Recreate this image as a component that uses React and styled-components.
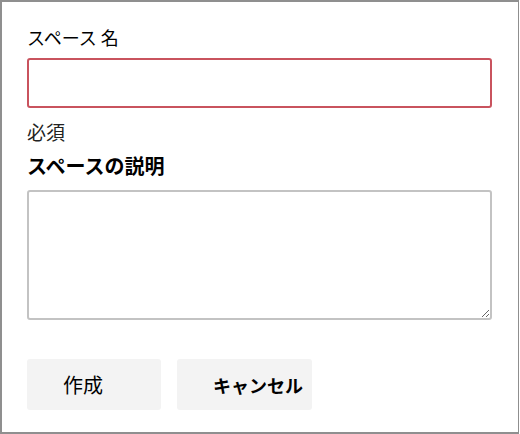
import React from 'react'
import styled, { createGlobalStyle } from 'styled-components'

const GlobalStyle = createGlobalStyle`
  html, body {
    margin: 0;
    padding: 0;
    background: #ffffff;
  }
  body {
    font-family: "Noto Sans CJK JP", "Noto Sans", sans-serif;
    color: #1b1b1b;
  }
`

const Frame = styled.div`
  box-sizing: border-box;
  width: 519px;
  height: 434px;
  border: 2px solid #8f8f8f;
  border-right-width: 1px;
  padding: 23px 0 0 25px;
  display: flex;
  flex-direction: column;
  align-items: flex-start;
`

const Label = styled.label`
  font-size: ${p => (p.$strong ? '20px' : '18px')};
  font-weight: ${p => (p.$strong ? 600 : 400)};
  line-height: ${p => (p.$strong ? '28px' : '25px')};
  margin-top: ${p => p.$gap || 0}px;
  color: #000;
  white-space: pre;
`

const Hint = styled.div`
  font-size: 19px;
  line-height: 22px;
  margin-top: 13px;
  color: #222;
`

const TextInput = styled.input`
  box-sizing: border-box;
  width: 465px;
  height: 50px;
  margin-top: 8px;
  border: 2px solid #c9535e;
  border-radius: 3px;
  outline: none;
  padding: 0 10px;
  font: inherit;
  font-size: 17px;
`

const TextArea = styled.textarea`
  box-sizing: border-box;
  width: 465px;
  height: 130px;
  margin-top: 10px;
  border: 2px solid #c3c3c3;
  border-radius: 3px;
  outline: none;
  padding: 8px 10px;
  font: inherit;
  font-size: 17px;
  resize: vertical;
`

const Actions = styled.div`
  display: flex;
  gap: 16px;
  margin-top: 39px;
`

const Button = styled.button`
  box-sizing: border-box;
  width: ${p => p.$width || 134}px;
  height: 51px;
  border: none;
  border-radius: 3px;
  background: #f3f3f3;
  padding: 0 0 0 36px;
  text-align: left;
  white-space: nowrap;
  font-family: "Noto Sans CJK JP", "Noto Sans", sans-serif;
  font-size: ${p => (p.$bold ? 18 : 20)}px;
  font-weight: ${p => (p.$bold ? 600 : 400)};
  color: #000;
  cursor: pointer;
`

export default function App() {
  return (
    <>
      <GlobalStyle />
      <Frame>
        <Label htmlFor="space-name">スペース 名</Label>
        <TextInput id="space-name" type="text" />
        <Hint>必須</Hint>
        <Label htmlFor="space-desc" $strong $gap={9}>スペースの説明</Label>
        <TextArea id="space-desc" />
        <Actions>
          <Button>作成</Button>
          <Button $bold $width={135}>キャンセル</Button>
        </Actions>
      </Frame>
    </>
  )
}
